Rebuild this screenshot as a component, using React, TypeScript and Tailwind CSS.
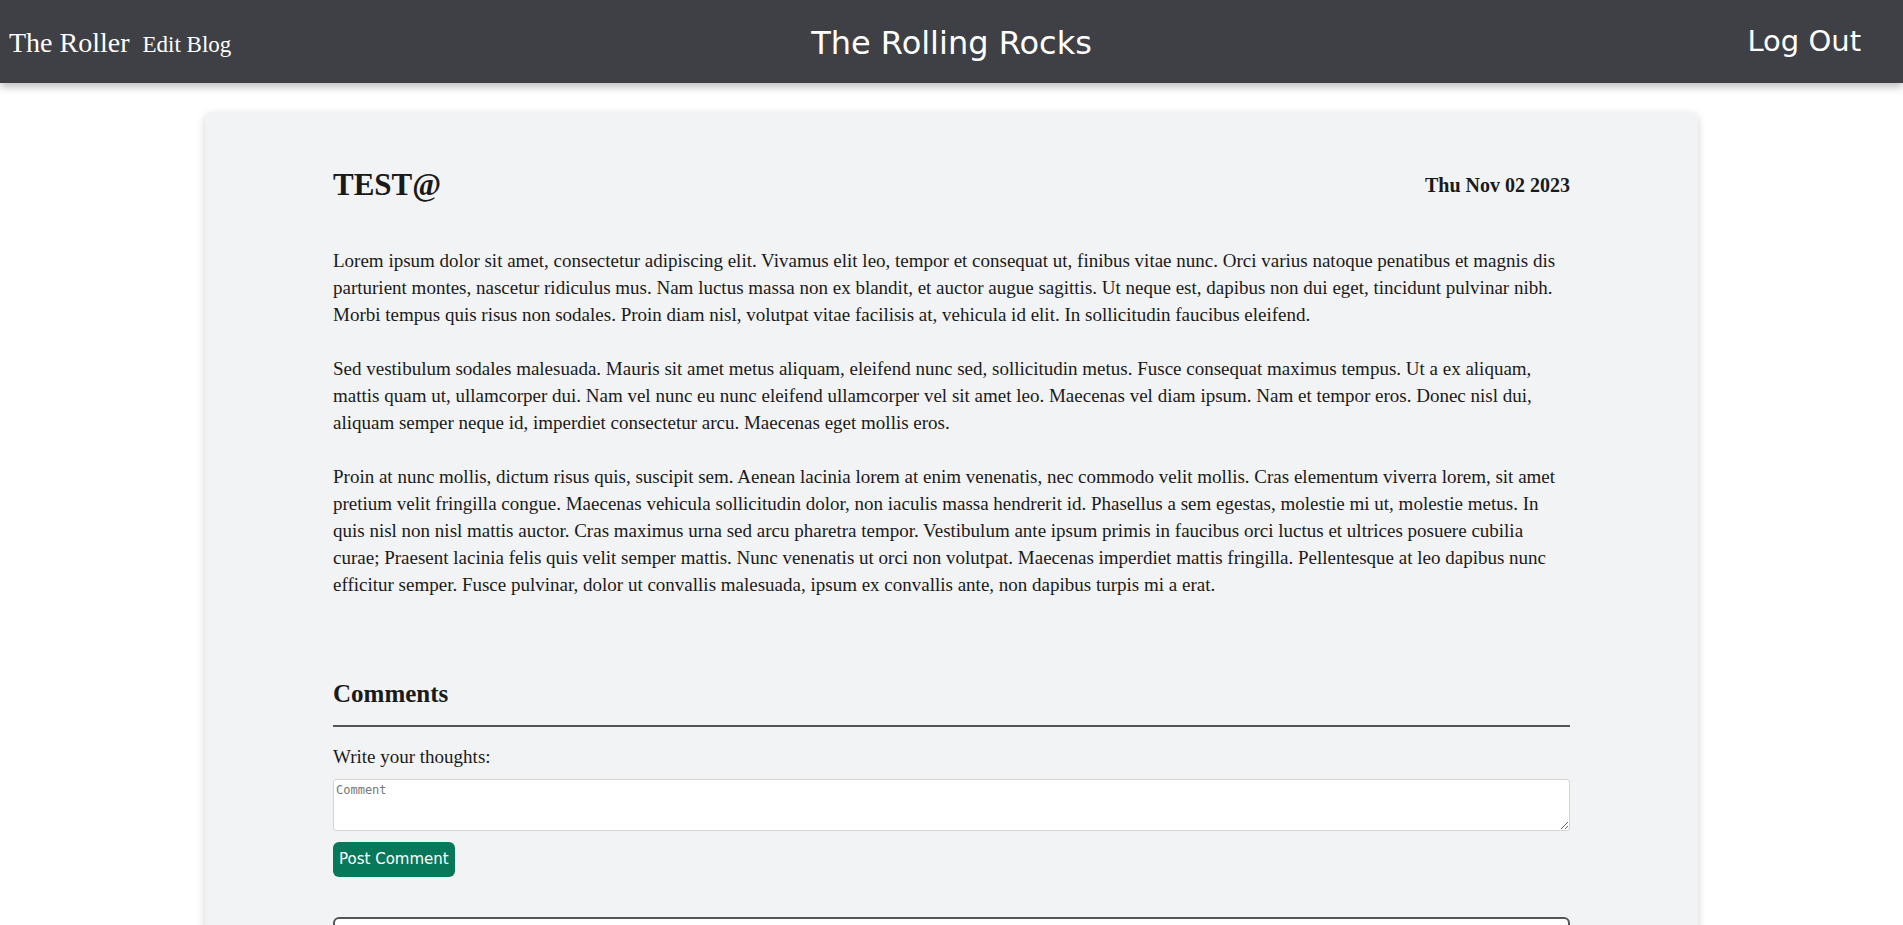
import React, { useState } from "react";

const serif = "font-['Liberation_Serif','Times_New_Roman',serif]";
const sans = "font-['DejaVu_Sans','Verdana',sans-serif]";

const body = `Lorem ipsum dolor sit amet, consectetur adipiscing elit. Vivamus elit leo, tempor et consequat ut, finibus vitae nunc. Orci varius natoque penatibus et magnis dis parturient montes, nascetur ridiculus mus. Nam luctus massa non ex blandit, et auctor augue sagittis. Ut neque est, dapibus non dui eget, tincidunt pulvinar nibh. Morbi tempus quis risus non sodales. Proin diam nisl, volutpat vitae facilisis at, vehicula id elit. In sollicitudin faucibus eleifend.

Sed vestibulum sodales malesuada. Mauris sit amet metus aliquam, eleifend nunc sed, sollicitudin metus. Fusce consequat maximus tempus. Ut a ex aliquam, mattis quam ut, ullamcorper dui. Nam vel nunc eu nunc eleifend ullamcorper vel sit amet leo. Maecenas vel diam ipsum. Nam et tempor eros. Donec nisl dui, aliquam semper neque id, imperdiet consectetur arcu. Maecenas eget mollis eros.

Proin at nunc mollis, dictum risus quis, suscipit sem. Aenean lacinia lorem at enim venenatis, nec commodo velit mollis. Cras elementum viverra lorem, sit amet pretium velit fringilla congue. Maecenas vehicula sollicitudin dolor, non iaculis massa hendrerit id. Phasellus a sem egestas, molestie mi ut, molestie metus. In quis nisl non nisl mattis auctor. Cras maximus urna sed arcu pharetra tempor. Vestibulum ante ipsum primis in faucibus orci luctus et ultrices posuere cubilia curae; Praesent lacinia felis quis velit semper mattis. Nunc venenatis ut orci non volutpat. Maecenas imperdiet mattis fringilla. Pellentesque at leo dapibus nunc efficitur semper. Fusce pulvinar, dolor ut convallis malesuada, ipsum ex convallis ante, non dapibus turpis mi a erat.`;

function Header() {
    return (
        <header className="h-[83px] bg-[#3f3f46] text-white flex items-center justify-between px-[9px] shadow-[0_4px_8px_rgba(0,0,0,0.25)] relative z-10">
            <div className={`flex items-baseline gap-[13px] ${serif} pt-[2px]`}>
                <a className="text-[28px]">The Roller</a>
                <a className="text-[23px]">Edit Blog</a>
            </div>
            <h1 className={`${sans} text-[32px] absolute left-1/2 -translate-x-1/2 top-[19px]`}>
                The Rolling Rocks
            </h1>
            <button className={`${sans} text-[29px] mr-[33px]`}>Log Out</button>
        </header>
    );
}

export default function App() {
    const [comment, setComment] = useState("");
    return (
        <div className="min-h-screen bg-white">
            <Header />
            <main className="pt-[30px]">
                <article className={`${serif} mx-auto w-[1493px] bg-[#f2f3f5] rounded-md shadow-[0_2px_8px_rgba(0,0,0,0.18)] px-32 pt-[49px] pb-16 text-[#1a1a1a]`}>
                    <div className="flex justify-between items-center">
                        <h2 className="text-[31px] font-bold">TEST@</h2>
                        <span className="text-[20px] font-bold">Thu Nov 02 2023</span>
                    </div>
                    <p className="mt-[38px] text-[19px] leading-[27px] whitespace-pre-wrap">
                        {body}
                    </p>
                    <section className="mt-[77px]">
                        <h3 className="text-[25px] font-bold pb-[13px] border-b-2 border-[#555]">
                            Comments
                        </h3>
                        <label className="block mt-[16px] text-[19px]">
                            Write your thoughts:
                        </label>
                        <textarea
                            className="block mt-[7px] w-full h-[52px] bg-white border border-[#d4d4d4] rounded-[3px] px-[2px] py-[1px] font-['DejaVu_Sans_Mono',monospace] text-[12px] placeholder:text-[#777] outline-none"
                            placeholder="Comment"
                            value={comment}
                            onChange={(e) => setComment(e.target.value)}
                        />
                        <button className={`${sans} mt-[11px] h-[35px] px-[6px] bg-[#07785a] text-white text-[15px] rounded-md`}>
                            Post Comment
                        </button>
                        <div className="mt-[40px] h-[120px] border-2 border-[#555] rounded-md bg-white" />
                    </section>
                </article>
            </main>
        </div>
    );
}
